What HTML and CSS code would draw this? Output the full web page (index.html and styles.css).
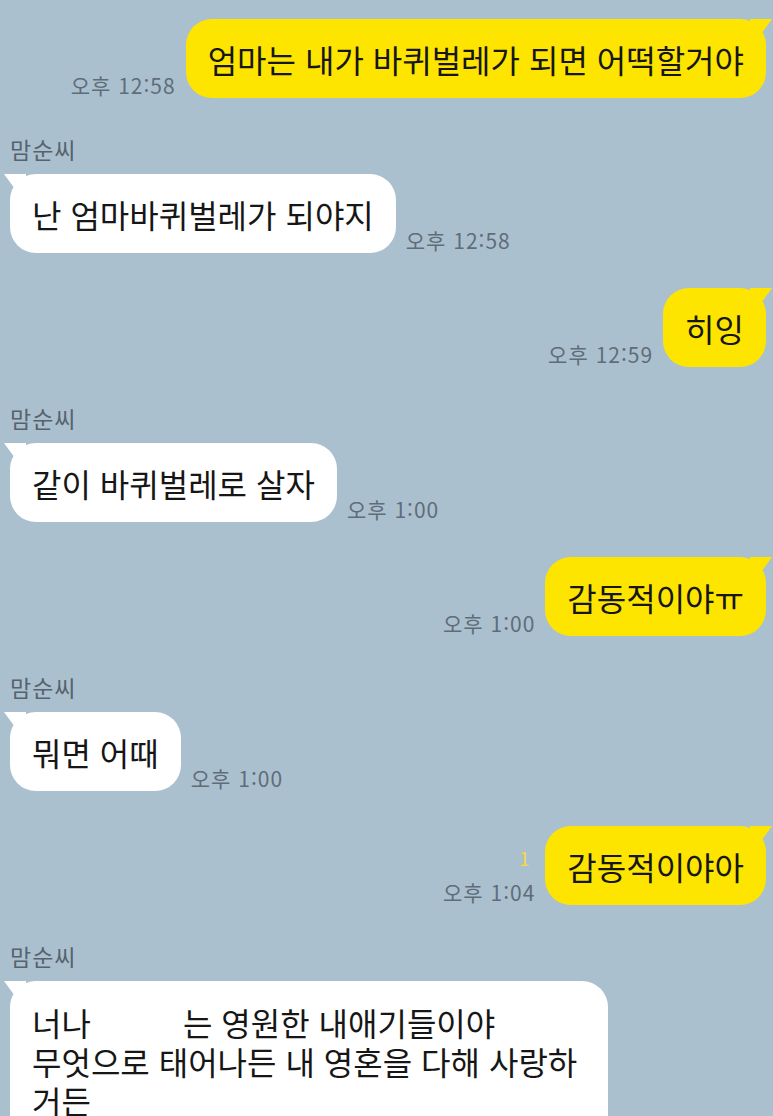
FILE: index.html
```html
<!DOCTYPE html>
<html lang="ko">
<head>
<meta charset="utf-8">
<link rel="stylesheet" href="styles.css">
</head>
<body>
<div class="chat">
  <div class="row sent r1">
    <div class="meta"><span class="time">오후 12:58</span></div>
    <div class="bubble me">엄마는 내가 바퀴벌레가 되면 어떡할거야</div>
  </div>

  <div class="name n1">맘순씨</div>
  <div class="row recv">
    <div class="bubble them">난 엄마바퀴벌레가 되야지</div>
    <div class="meta"><span class="time">오후 12:58</span></div>
  </div>

  <div class="row sent r3">
    <div class="meta"><span class="time">오후 12:59</span></div>
    <div class="bubble me">히잉</div>
  </div>

  <div class="name">맘순씨</div>
  <div class="row recv">
    <div class="bubble them">같이 바퀴벌레로 살자</div>
    <div class="meta"><span class="time">오후 1:00</span></div>
  </div>

  <div class="row sent r3">
    <div class="meta"><span class="time">오후 1:00</span></div>
    <div class="bubble me">감동적이야ㅠ</div>
  </div>

  <div class="name">맘순씨</div>
  <div class="row recv">
    <div class="bubble them">뭐면 어때</div>
    <div class="meta"><span class="time">오후 1:00</span></div>
  </div>

  <div class="row sent r3">
    <div class="meta"><span class="unread">1</span><span class="time">오후 1:04</span></div>
    <div class="bubble me">감동적이야아</div>
  </div>

  <div class="name">맘순씨</div>
  <div class="row recv">
    <div class="bubble them long">너나<span class="blank"></span>는 영원한 내애기들이야<br>무엇으로 태어나든 내 영혼을 다해 사랑하<br>거든</div>
  </div>
</div>
</body>
</html>
```

FILE: styles.css
```css
* { box-sizing: border-box; }
html, body {
  margin: 0;
  padding: 0;
  background: #abc0cf;
  overflow: hidden;
}
body {
  width: 773px;
  height: 1116px;
  font-family: "Noto Sans CJK KR", "Noto Sans", sans-serif;
}
.chat {
  display: flex;
  flex-direction: column;
  padding: 19px 7px 0 10px;
}
.row {
  display: flex;
  align-items: flex-end;
  gap: 10px;
}
.sent { justify-content: flex-end; }
.r3 { margin-top: 35px; }
.recv { justify-content: flex-start; }
.bubble {
  position: relative;
  font-size: 32px;
  line-height: 40px;
  color: #161616;
  padding: 20px 22px 19px 22px;
  border-radius: 26px;
  white-space: nowrap;
}
.me { background: #fee500; }
.them { background: #ffffff; }
.me::before {
  content: "";
  position: absolute;
  top: 0;
  right: -6px;
  width: 22px;
  height: 18px;
  background: #fee500;
  clip-path: polygon(0 0, 100% 0, 40% 100%, 0 100%);
}
.them::before {
  content: "";
  position: absolute;
  top: 0;
  left: -6px;
  width: 22px;
  height: 18px;
  background: #ffffff;
  clip-path: polygon(0 0, 100% 0, 100% 100%, 60% 100%);
}
.meta {
  display: flex;
  flex-direction: column;
  align-items: flex-end;
  padding-bottom: 1px;
}
.recv .meta { align-items: flex-start; }
.time {
  font-size: 21px;
  line-height: 24px;
  letter-spacing: 1px;
  color: #5f6d79;
}
.unread {
  font-size: 18px;
  line-height: 20px;
  color: #f5dc36;
  margin-bottom: 12px;
  margin-right: 6px;
}
.name {
  font-size: 23px;
  line-height: 28px;
  letter-spacing: 1px;
  color: #56636e;
  margin-top: 37px;
  margin-bottom: 11px;
}
.long {
  width: 598px;
  white-space: normal;
  line-height: 39px;
  border-radius: 26px 26px 0 0;
  padding-top: 22px;
  padding-bottom: 40px;
}
.blank {
  display: inline-block;
  width: 92px;
}
```
